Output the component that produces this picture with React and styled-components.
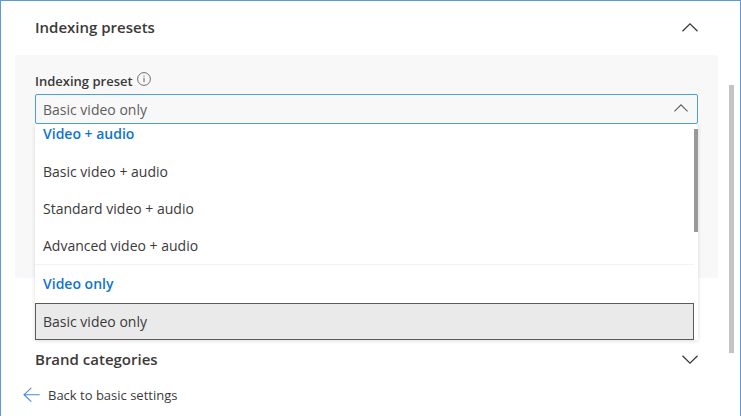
import React, { useState } from 'react';
import styled, { createGlobalStyle } from 'styled-components';

const GlobalStyle = createGlobalStyle`
  * {
    box-sizing: border-box;
  }

  body {
    margin: 0;
    background: #fff;
    color: #3b3a39;
    font-family: 'Open Sans', 'Noto Sans', sans-serif;
    font-size: 14px;
    line-height: 20px;
  }
`;

const Page = styled.div`
  display: flex;
  flex-direction: column;
  min-height: 100vh;
  border: 1px solid #5b9bd5;
`;

const Body = styled.div`
  display: flex;
  gap: 11px;
  padding: 0 6px 0 14px;
`;

const Sections = styled.main`
  flex: 1;
  min-width: 0;
`;

const ScrollTrack = styled.div`
  display: flex;
  width: 5px;
  padding: 84px 0 34px;
`;

const ScrollThumb = styled.div`
  flex: 1;
  background: #c4c4c4;
`;

const SectionTitle = styled.h2`
  margin: 0;
`;

const SectionToggle = styled.button`
  display: flex;
  align-items: center;
  justify-content: space-between;
  width: 100%;
  height: 54px;
  padding: 0 20px 2px;
  border: 0;
  background: none;
  color: inherit;
  font: inherit;
  font-size: 15px;
  font-weight: 600;
  cursor: pointer;
`;

const Panel = styled.div`
  min-height: 223px;
  margin-bottom: 55px;
  padding: 16px 20px;
  background: #f8f8f8;
`;

const LabelRow = styled.div`
  display: flex;
  gap: 4px;
  height: 23px;
`;

const Label = styled.label`
  font-size: 13px;
  font-weight: 600;
  line-height: 20px;
`;

const InfoButton = styled.button`
  display: flex;
  align-self: flex-start;
  padding: 1px 0 0;
  border: 0;
  background: none;
  color: #605e5c;
`;

const Dropdown = styled.div`
  position: relative;
`;

const Select = styled.select`
  display: block;
  width: 100%;
  height: 30px;
  padding: 2px 7px 0;
  border: 1px solid #4a9fe0;
  border-radius: 2px;
  background: #f8f8f8;
  color: #605e5c;
  font: inherit;
  appearance: none;
`;

const SelectIcon = styled.span`
  position: absolute;
  top: 10px;
  right: 10px;
  display: flex;
  color: #605e5c;
  pointer-events: none;
`;

const Callout = styled.div`
  position: absolute;
  top: 100%;
  left: 0;
  right: 0;
  display: flex;
  height: 216px;
  background: #fff;
  box-shadow: 0 1px 4px rgba(0, 0, 0, 0.14);
  clip-path: inset(0 -6px -6px);
`;

const Options = styled.div`
  display: flex;
  flex: 1;
  flex-direction: column;
  justify-content: flex-end;
  overflow: hidden;
`;

const Group = styled.div`
  display: flex;
  flex-direction: column;
  flex-shrink: 0;

  & + & {
    border-top: 1px solid #f3f3f3;
  }
`;

const GroupHeader = styled.div`
  padding: 0 8px;
  color: #0f74d1;
  font-weight: 600;
  line-height: 38px;
`;

const Option = styled.button`
  height: 37px;
  padding: 0 7px;
  border: 1px solid ${({ $selected }) => ($selected ? '#5a5a5a' : 'transparent')};
  background: ${({ $selected }) => ($selected ? '#eaeaea' : 'none')};
  color: inherit;
  font: inherit;
  text-align: left;
  cursor: pointer;
`;

const ListTrack = styled.div`
  width: 4px;
  padding-top: 5px;
`;

const ListThumb = styled.div`
  height: 103px;
  background: #999;
`;

const Footer = styled.footer`
  padding: 0 22px 8px;
`;

const BackLink = styled.a`
  display: inline-flex;
  align-items: center;
  gap: 8px;
  height: 16px;
  color: inherit;
  font-size: 13px;
  text-decoration: none;
`;

const Chevron = ({ down, size = 16 }) => (
  <svg width={size} height={size / 2 + 1} viewBox="0 0 16 9" fill="none" stroke="currentColor" strokeWidth="1.3">
    <path d={down ? 'M0.5 0.7 8 8.1 15.5 0.7' : 'M0.5 8.3 8 0.9 15.5 8.3'} />
  </svg>
);

const InfoIcon = () => (
  <svg width="14" height="14" viewBox="0 0 14 14" fill="none" stroke="currentColor">
    <circle cx="7" cy="7" r="6.4" strokeWidth="0.9" />
    <path d="M7 5.8v4.4M7 3.6v1.1" />
  </svg>
);

const BackArrow = () => (
  <svg width="17" height="16" viewBox="0 0 17 16" fill="none" stroke="#4a86d8" strokeWidth="1.1">
    <path d="M8.3 0.8 1 7.7l7.3 6.9M1 7.7h15.6" />
  </svg>
);

const presets = [
  {
    title: 'Video + audio',
    options: ['Basic video + audio', 'Standard video + audio', 'Advanced video + audio'],
  },
  { title: 'Video only', options: ['Basic video only'] },
];

const PresetDropdown = () => {
  const [preset, setPreset] = useState('Basic video only');

  return (
    <Dropdown>
      <Select id="preset" value={preset} onChange={(e) => setPreset(e.target.value)}>
        {presets.map((group) => (
          <optgroup key={group.title} label={group.title}>
            {group.options.map((name) => (
              <option key={name}>{name}</option>
            ))}
          </optgroup>
        ))}
      </Select>
      <SelectIcon>
        <Chevron size={14} />
      </SelectIcon>
      <Callout>
        <Options role="listbox" aria-labelledby="preset-label">
          {presets.map((group) => (
            <Group key={group.title} role="group">
              <GroupHeader>{group.title}</GroupHeader>
              {group.options.map((name) => (
                <Option
                  key={name}
                  type="button"
                  role="option"
                  aria-selected={name === preset}
                  $selected={name === preset}
                  onClick={() => setPreset(name)}
                >
                  {name}
                </Option>
              ))}
            </Group>
          ))}
        </Options>
        <ListTrack>
          <ListThumb />
        </ListTrack>
      </Callout>
    </Dropdown>
  );
};

const App = () => (
  <>
    <GlobalStyle />
    <Page>
      <Body>
        <Sections>
          <SectionTitle>
            <SectionToggle type="button" aria-expanded="true">
              Indexing presets
              <Chevron />
            </SectionToggle>
          </SectionTitle>
          <Panel>
            <LabelRow>
              <Label id="preset-label" htmlFor="preset">
                Indexing preset
              </Label>
              <InfoButton type="button" aria-label="Info">
                <InfoIcon />
              </InfoButton>
            </LabelRow>
            <PresetDropdown />
          </Panel>
          <SectionTitle>
            <SectionToggle type="button" aria-expanded="false">
              Brand categories
              <Chevron down />
            </SectionToggle>
          </SectionTitle>
        </Sections>
        <ScrollTrack>
          <ScrollThumb />
        </ScrollTrack>
      </Body>
      <Footer>
        <BackLink href="#basic">
          <BackArrow />
          Back to basic settings
        </BackLink>
      </Footer>
    </Page>
  </>
);

export default App;
